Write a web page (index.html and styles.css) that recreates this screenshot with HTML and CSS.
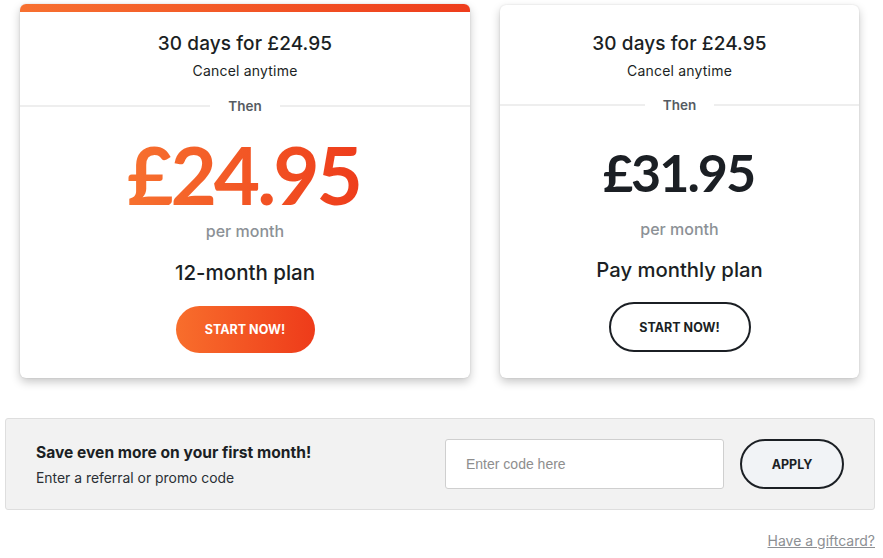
FILE: index.html
```html
<!DOCTYPE html>
<html lang="en">
<head>
<meta charset="utf-8">
<title>Plans</title>
<link rel="stylesheet" href="styles.css">
</head>
<body>
<div class="page">
  <div class="cards">
    <div class="card card-featured">
      <div class="intro">30 days for £24.95</div>
      <div class="cancel">Cancel anytime</div>
      <div class="divider"><span>Then</span></div>
      <div class="price price-featured">£24.95</div>
      <div class="per">per month</div>
      <div class="plan">12-month plan</div>
      <button class="btn btn-orange">START NOW!</button>
    </div>
    <div class="card card-plain">
      <div class="intro">30 days for £24.95</div>
      <div class="cancel">Cancel anytime</div>
      <div class="divider"><span>Then</span></div>
      <div class="price price-plain">£31.95</div>
      <div class="per">per month</div>
      <div class="plan">Pay monthly plan</div>
      <button class="btn btn-outline">START NOW!</button>
    </div>
  </div>
  <div class="promo">
    <div class="promo-text">
      <div class="promo-title">Save even more on your first month!</div>
      <div class="promo-sub">Enter a referral or promo code</div>
    </div>
    <input class="promo-input" type="text" placeholder="Enter code here">
    <button class="btn-apply">APPLY</button>
  </div>
  <div class="gift"><a href="#">Have a giftcard?</a></div>
</div>
</body>
</html>
```

FILE: styles.css
```css
* { box-sizing: border-box; }
html, body { margin: 0; padding: 0; background: #fff; }
body { font-family: Inter, "Noto Sans", sans-serif; color: #1b1f24; }
.page { width: 883px; padding: 4px 8px 0 5px; }
.cards { display: flex; align-items: flex-start; gap: 30px; padding-left: 15px; }
.card {
  background: #fff;
  border-radius: 6px;
  box-shadow: 0 4px 10px rgba(0,0,0,0.22), 0 0 2px rgba(0,0,0,0.12);
  display: flex;
  flex-direction: column;
  align-items: center;
  text-align: center;
}
.card-featured {
  width: 450px;
  height: 374px;
  padding: 28px 0 25px;
  position: relative;
  overflow: hidden;
}
.card-featured::before {
  content: "";
  position: absolute;
  left: 0; right: 0; top: 0;
  height: 8px;
  background: linear-gradient(90deg, #f77030, #ee3d1c);
}
.card-plain { width: 359px; margin-top: 1px; padding: 27px 0 26px; height: 373px; }
.intro { font-size: 19px; line-height: 24px; font-weight: 500; letter-spacing: 0.1px; }
.cancel { font-size: 14px; line-height: 18px; margin-top: 6px; letter-spacing: 0.2px; }
.divider {
  align-self: stretch;
  display: flex;
  align-items: center;
  margin-top: 17px;
  font-size: 13.5px;
  line-height: 18px;
  font-weight: 600;
  color: #555b62;
}
.card-plain .divider { margin-top: 16px; }
.divider::before, .divider::after {
  content: "";
  flex: 1;
  height: 2px;
  background: #eeeeee;
}
.divider span { padding: 0 18px; }
.price { font-family: Lato, sans-serif; font-weight: 700; line-height: 1; }
.price-featured {
  font-size: 80px;
  margin-top: 19px;
  background: linear-gradient(90deg, #f7712f, #ee3c1b);
  -webkit-background-clip: text;
  background-clip: text;
  color: transparent;
  letter-spacing: -3px;
  padding-right: 3px;
}
.price-plain { font-size: 52px; margin-top: 32px; color: #1b1f24; letter-spacing: -2px; padding-right: 2px; }
.per { font-size: 16px; line-height: 20px; color: #8c9196; font-weight: 500; }
.price-featured + .per { margin-top: 7px; }
.price-plain + .per { margin-top: 21px; }
.plan { font-size: 20.5px; line-height: 24px; margin-top: 20px; font-weight: 500; }
.card-plain .plan { margin-top: 19px; font-size: 20.3px; }
.btn {
  font-family: Inter, sans-serif;
  font-weight: 700;
  font-size: 12.5px;
  border-radius: 30px;
  cursor: pointer;
}
.btn-orange {
  margin-top: 21px;
  width: 139px;
  height: 47px;
  border: none;
  color: #fff;
  background: linear-gradient(90deg, #f86e2c, #ee3b1a);
}
.btn-outline {
  margin-top: 20px;
  width: 142px;
  height: 50px;
  border: 2px solid #1b1f24;
  color: #1b1f24;
  background: #fff;
}
.promo {
  margin-top: 40px;
  display: flex;
  align-items: center;
  height: 92px;
  background: #f2f2f2;
  border: 1px solid #dedede;
  border-radius: 3px;
  padding: 0 30px 0 30px;
}
.promo-text { flex: 1; padding-top: 2px; }
.promo-title { font-size: 15.6px; line-height: 20px; font-weight: 700; }
.promo-sub { font-size: 13.9px; line-height: 18px; margin-top: 6px; color: #2a2f35; }
.promo-input {
  width: 279px;
  height: 50px;
  border: 1px solid #cfcfcf;
  border-radius: 3px;
  background: #fff;
  padding: 0 20px;
  font-family: "Liberation Sans", Arial, sans-serif;
  font-size: 14px;
  outline: none;
}
.promo-input::placeholder { color: #8e8e8e; }
.btn-apply {
  margin-left: 16px;
  width: 104px;
  height: 50px;
  border: 2px solid #1b1f24;
  border-radius: 25px;
  background: #f1f3f6;
  font-family: Inter, sans-serif;
  font-weight: 700;
  font-size: 12.5px;
  color: #1b1f24;
}
.gift { text-align: right; margin-top: 22px; font-size: 14px; line-height: 18px; }
.gift a { color: #8c8f93; text-decoration: underline; }
```
